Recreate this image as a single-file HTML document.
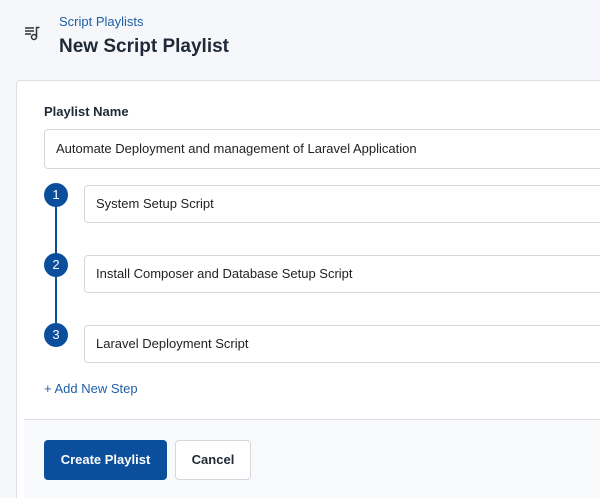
<!DOCTYPE html><html style="overflow:hidden;height:498px"><head><style>
body{margin:0;width:600px;height:498px;background:#f5f7fa;font-family:"Liberation Sans",sans-serif;position:relative;overflow:hidden;color:#1f2937}
.a{position:absolute}
.card{left:16px;top:80px;width:600px;height:440px;background:#fff;border:1px solid #dcdfe4;border-radius:4px}
.inp{position:absolute;background:#fff;border:1px solid #d4d7dc;border-radius:4px;font-size:13px;color:#222;box-sizing:border-box;padding-left:11px;width:600px}
.c{position:absolute;width:24px;height:24px;border-radius:50%;background:#0b4f9c;color:#fff;font-size:13px;text-align:center;line-height:24px;left:44px}
</style></head><body>
<svg class="a" style="left:24px;top:26px" width="18" height="16" viewBox="0 0 18 16"><g stroke="#333" stroke-width="1.5" fill="none"><path d="M1 2h9M1 5h9M1 8h6"/><circle cx="10" cy="11" r="2.5"/><path d="M12.5 11V1.5h3"/></g></svg>
<div class="a" style="left:59px;top:14px;font-size:13px;color:#1f5fa8">Script Playlists</div>
<div class="a" style="left:59px;top:36px;font-size:19px;font-weight:bold;color:#1f2937">New Script Playlist</div>
<div class="a card"></div>
<div class="a" style="left:24px;top:419px;width:600px;height:100px;background:#f8f9fb;border-top:1px solid #dcdfe4"></div>
<div class="a" style="left:44px;top:104px;font-size:13px;font-weight:bold">Playlist Name</div>
<div class="inp" style="left:44px;top:129px;height:40px;line-height:38px">Automate Deployment and management of Laravel Application</div>
<div class="a" style="left:55px;top:200px;width:2px;height:130px;background:#0b4f9c"></div>
<div class="c" style="top:183px">1</div>
<div class="c" style="top:253px">2</div>
<div class="c" style="top:323px">3</div>
<div class="inp" style="left:84px;top:185px;height:38px;line-height:36px">System Setup Script</div>
<div class="inp" style="left:84px;top:255px;height:38px;line-height:36px">Install Composer and Database Setup Script</div>
<div class="inp" style="left:84px;top:325px;height:38px;line-height:36px">Laravel Deployment Script</div>
<div class="a" style="left:44px;top:381px;font-size:13px;color:#1f5fa8">+ Add New Step</div>
<div class="a" style="left:44px;top:440px;width:123px;height:40px;background:#0b4f9c;border-radius:4px;color:#fff;font-size:13px;font-weight:bold;text-align:center;line-height:40px">Create Playlist</div>
<div class="a" style="left:175px;top:440px;width:74px;height:38px;background:#fff;border:1px solid #d4d7dc;border-radius:4px;font-size:13px;font-weight:bold;text-align:center;line-height:38px">Cancel</div>
</body></html>
